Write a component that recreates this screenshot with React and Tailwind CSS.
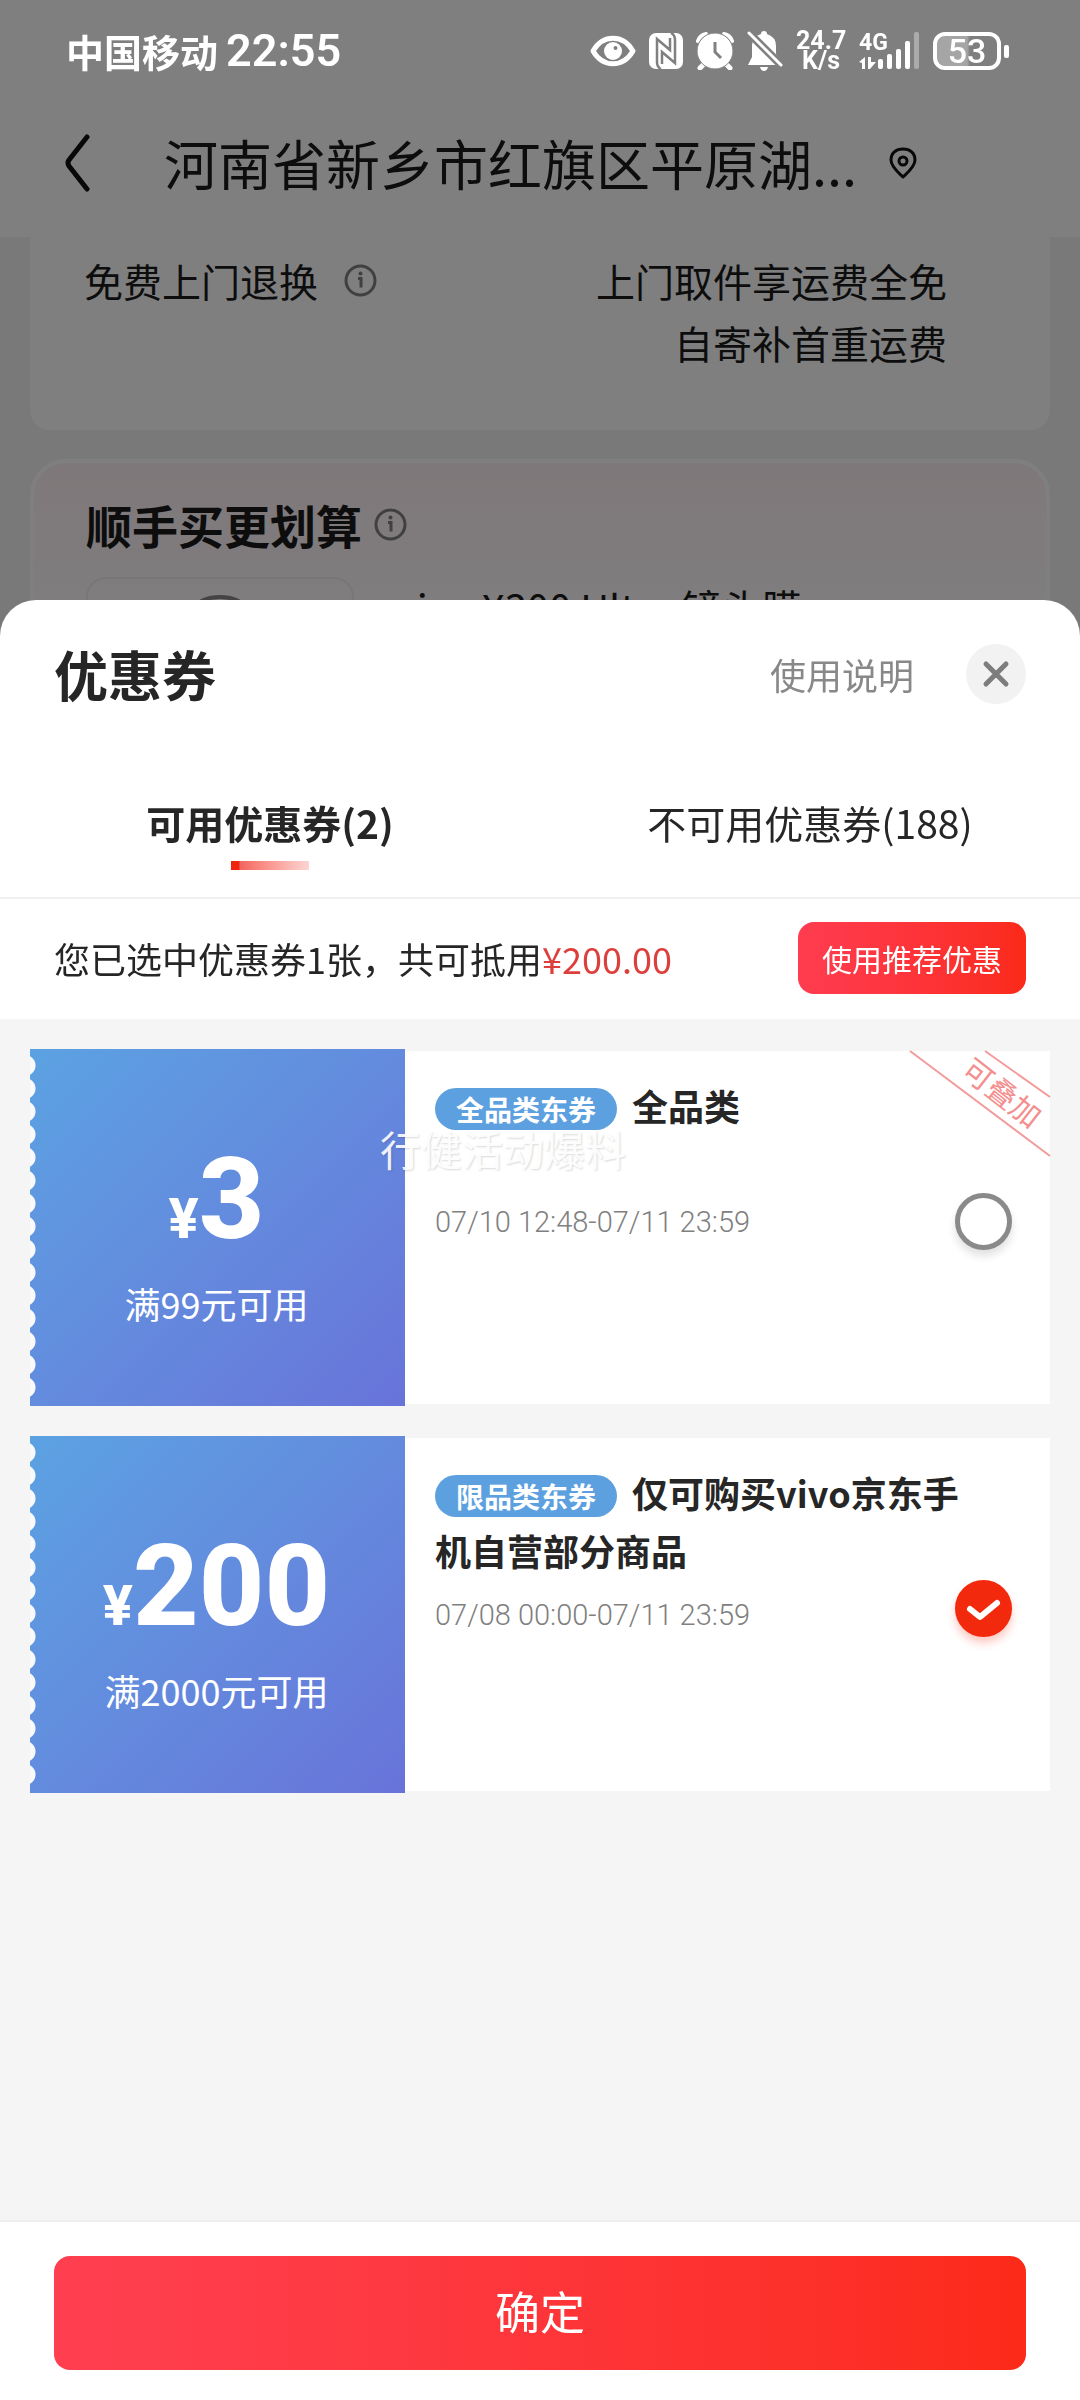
import React, { useState } from 'react';

const coupons = [
  {
    id: 1,
    amount: 3,
    limit: '满99元可用',
    tag: '全品类东券',
    title: '全品类',
    period: '07/10 12:48-07/11 23:59',
    stackable: true,
  },
  {
    id: 2,
    amount: 200,
    limit: '满2000元可用',
    tag: '限品类东券',
    title: '仅可购买vivo京东手机自营部分商品',
    period: '07/08 00:00-07/11 23:59',
    stackable: false,
  },
];

const InfoIcon = () => (
  <svg className="w-[33px] h-[33px] shrink-0" viewBox="0 0 33 33" fill="none" stroke="#808080" strokeWidth="3">
    <circle cx="16.5" cy="16.5" r="14.5" />
    <path d="M14 14.5h3v9" />
    <circle cx="16.5" cy="9.5" r="2" fill="#808080" stroke="none" />
  </svg>
);

const StatusBar = () => (
  <div className="relative z-20 h-[102px] pl-[66px] pr-[71px] flex items-center justify-between text-white">
    <div className="flex items-center gap-2">
      <span className="text-[38px] leading-[44px] font-bold">中国移动</span>
      <span className="font-['Roboto',sans-serif] text-[45px] leading-[44px] font-semibold">22:55</span>
    </div>

    <div className="flex items-center gap-[13px]">
      {/* Eye comfort */}
      <svg className="w-[46px] h-[32px]" viewBox="0 0 46 32">
        <path d="M3 16C13-1 33-1 43 16C33 33 13 33 3 16Z" fill="none" stroke="#fff" strokeWidth="5" strokeLinejoin="round" />
        <circle cx="23" cy="16" r="9" fill="#fff" />
        <circle cx="25.500" cy="13" r="2" fill="#808080" />
      </svg>

      {/* NFC */}
      <svg className="w-[34px] h-[36px]" viewBox="0 0 34 36">
        <rect width="34" height="36" rx="7" fill="#fff" />
        <g fill="none" stroke="#808080" strokeWidth="2.500">
          <path d="M12 36Q8 34 8 29V6L21 17V5" />
          <path d="M22 0Q26 2 26 7V30L13 19V31" />
        </g>
      </svg>

      {/* Alarm */}
      <svg className="w-[38px] h-[38px]" viewBox="0 0 38 38">
        <path d="M9 31L4 36M29 31L34 36" stroke="#fff" strokeWidth="5" strokeLinecap="round" />
        <path d="M2 9Q4 3 10 2M36 9Q34 3 28 2" fill="none" stroke="#fff" strokeWidth="4" strokeLinecap="round" />
        <circle cx="19" cy="19" r="18" fill="#fff" stroke="#808080" strokeWidth="1" />
        <path d="M19 10V20L25 26" fill="none" stroke="#808080" strokeWidth="3" />
      </svg>

      {/* Muted bell */}
      <svg className="w-[36px] h-[40px]" viewBox="0 0 36 40">
        <path d="M17 0q3 0 3 3q9 3 9 12v8l5 11H1l4-8V14Q5 6 14 3q0-3 3-3Z" fill="#fff" />
        <path d="M13 36h8q-1 4-4 4t-4-4Z" fill="#fff" />
        <path d="M0 0L36 36" stroke="#808080" strokeWidth="8" />
        <path d="M2 2L34 34" stroke="#fff" strokeWidth="3" strokeLinecap="round" />
      </svg>

      <div className="w-[50px] text-center font-['Roboto',sans-serif] text-[25px] leading-[20px] font-bold">
        <div>24.7</div>
        <div>K/s</div>
      </div>

      {/* Signal */}
      <svg className="w-[61px] h-[38px] overflow-visible" viewBox="0 0 61 38" fill="#fff">
        <text x="0" y="18" fontSize="23" fontWeight="700" fontFamily="Roboto, sans-serif">4G</text>
        <path d="M0 30L6 25V37H3V31ZM9 25H12V30L17 30L11 37H9Z" />
        <rect x="19" y="27" width="5" height="10" rx="2" />
        <rect x="28" y="22" width="5" height="15" rx="2" />
        <rect x="37" y="17" width="5" height="20" rx="2" />
        <rect x="46" y="9" width="5" height="28" rx="2" />
        <rect x="55" y="0" width="5" height="37" rx="2" fillOpacity="0.350" />
      </svg>

      {/* Battery */}
      <div className="flex items-center gap-[3px]">
        <div className="w-[68px] h-[38px] rounded-[12px] border-4 border-white bg-linear-to-r from-white/30 from-50% to-transparent to-55% flex items-center justify-center font-['Roboto',sans-serif] text-[34px] leading-[34px] font-medium">
          53
        </div>
        <div className="w-[5px] h-[13px] rounded-[2px] bg-white" />
      </div>
    </div>
  </div>
);

const CheckoutPage = () => (
  <div className="text-[#1a1a1a]">
    <div className="bg-white h-[135px] pl-[64px] pb-[14px] flex items-center">
      <button aria-label="返回" className="w-[100px]">
        <svg className="w-[27px] h-[60px]" viewBox="0 0 27 60" fill="none" stroke="#111" strokeWidth="5" strokeLinecap="round" strokeLinejoin="round">
          <path d="M23 4L5 27Q3 30 5 33L23 56" />
        </svg>
      </button>
      <h1 className="text-[54px] leading-[80px]">河南省新乡市红旗区平原湖...</h1>
      <svg className="w-[28px] h-[32px] ml-8" viewBox="0 0 28 32" fill="none" stroke="#111" strokeWidth="3" strokeLinejoin="round">
        <path d="M14 30C10 26 2 20 2 13C2 6 7 2 14 2S26 6 26 13C26 20 18 26 14 30Z" />
        <circle cx="14" cy="14" r="4" />
      </svg>
    </div>

    <div className="px-[30px]">
      <div className="bg-white rounded-b-[20px] h-[193px] pt-[12px] pl-[54px] pr-[103px] flex justify-between text-[39px] leading-[62px]">
        <div className="flex items-center gap-[26px] h-[62px]">
          <span>免费上门退换</span>
          <InfoIcon />
        </div>
        <div className="text-right">
          <div>上门取件享运费全免</div>
          <div>自寄补首重运费</div>
        </div>
      </div>

      <div className="mt-[29px] h-[400px] rounded-[36px] border-4 border-white bg-linear-to-b from-[#fff0f4] to-white to-50% pt-[28px] px-[52px]">
        <div className="flex items-center gap-[12px]">
          <h2 className="text-[46px] leading-[66px] font-bold">顺手买更划算</h2>
          <InfoIcon />
        </div>
        <div className="mt-5 flex gap-[42px]">
          <div className="w-[268px] h-[268px] rounded-[20px] border-2 border-[#eee] flex justify-center pt-4">
            <div className="w-[90px] h-[90px] rounded-full border-4 border-[#888]" />
          </div>
          <div className="text-[40px] leading-[60px]">vivo X300 Ultra 镜头膜</div>
        </div>
      </div>
    </div>
  </div>
);

const CouponCard = ({ coupon, checked, onToggle }) => (
  <label className="flex items-center cursor-pointer">
    <div className="flex shrink-0 w-[375px] h-[357px] bg-linear-135 from-[#5ba2e2] to-[#6873d9]">
      {/* Perforated edge */}
      <div className="w-[6px] my-[5px] bg-[radial-gradient(circle_at_-5px_50%,#f9f9fa_10px,transparent_11px)] bg-[length:6px_23px]" />
      <div className="flex-1 pt-[92px] pr-[8px] flex flex-col items-center text-white">
        <div className="flex items-baseline font-['Roboto',sans-serif] font-extrabold">
          <span className="text-[56px] leading-[56px]">¥</span>
          <span className="text-[114px] leading-[116px]">{coupon.amount}</span>
        </div>
        <div className="mt-[19px] text-[36px] leading-[54px]">{coupon.limit}</div>
      </div>
    </div>

    <div className="relative flex-1 h-[353px] bg-white pl-[30px] pr-[38px] flex items-center justify-between">
      <div className="self-start flex-1 pt-[25px]">
        <h3 className="min-h-[110px] -mr-4 text-[36px] leading-[58px] font-bold text-[#262626]">
          <span className="inline-block align-middle mr-[15px] px-[21px] rounded-full bg-[#5da0df] text-white text-[28px] leading-[42px] -mt-1">
            {coupon.tag}
          </span>
          {coupon.title}
        </h3>
        <p className="mt-4 font-['Roboto',sans-serif] font-light text-[29px] leading-[40px] text-[#808080]">{coupon.period}</p>
      </div>

      <span className="relative w-[57px] h-[57px] shrink-0 mb-3">
        <input
          type="checkbox"
          checked={checked}
          onChange={onToggle}
          className="block appearance-none w-[57px] h-[57px] rounded-full border-[5px] border-[#8a8a8a] bg-white shadow-[0_6px_8px_rgba(0,0,0,0.12)] checked:border-[#f3290e] checked:bg-[#f3290e] checked:shadow-[0_6px_8px_rgba(243,41,14,0.25)]"
        />
        {checked && (
          <svg className="absolute inset-0 pointer-events-none" viewBox="0 0 57 57" fill="none" stroke="#fff" strokeWidth="6" strokeLinecap="round" strokeLinejoin="round">
            <path d="M15 29L25 37L42 23" />
          </svg>
        )}
      </span>

      {coupon.stackable && (
        <svg className="absolute top-0 right-0 w-[140px] h-[106px] overflow-visible" viewBox="0 0 140 106">
          <path d="M0 0L140 105M75 0L140 46" stroke="#f59a9a" strokeWidth="2" />
          <text x="92" y="53" transform="rotate(38 92 42)" textAnchor="middle" fontSize="30" fill="#f38f8f">可叠加</text>
        </svg>
      )}
    </div>
  </label>
);

const App = () => {
  const [tab, setTab] = useState('usable');
  const [selected, setSelected] = useState([2]);

  const toggle = (id) => {
    setSelected(prev => prev.includes(id) ? prev.filter(x => x !== id) : [...prev, id]);
  };

  const total = coupons.filter(c => selected.includes(c.id)).reduce((sum, c) => sum + c.amount, 0);

  return (
    <div className="relative h-screen overflow-hidden bg-[#f2f2f2] font-['Noto_Sans_CJK_SC',sans-serif]">
      <div className="bg-white">
        <StatusBar />
      </div>
      <CheckoutPage />
      <div className="fixed inset-0 z-10 bg-black/50" />

      {/* Coupon sheet */}
      <div role="dialog" aria-label="优惠券" className="fixed inset-x-0 bottom-0 z-30 h-3/4 rounded-t-[36px] overflow-hidden bg-white text-[#262626] flex flex-col">
        <div className="h-[148px] px-[54px] flex items-center justify-between">
          <h2 className="text-[54px] leading-[80px] font-bold">优惠券</h2>
          <div className="flex items-center gap-[52px]">
            <a href="#rules" className="text-[36px] leading-[54px] text-[#888]">使用说明</a>
            <button aria-label="关闭" className="w-[60px] h-[60px] rounded-full bg-[#f2f2f2] flex items-center justify-center">
              <svg className="w-[28px] h-[28px]" viewBox="0 0 28 28" stroke="#7d7d7d" strokeWidth="5" strokeLinecap="round">
                <path d="M4 4L24 24M24 4L4 24" />
              </svg>
            </button>
          </div>
        </div>

        {/* Tabs */}
        <div role="tablist" className="h-[151px] grid grid-cols-2 border-b-2 border-[#f0f0f0] text-[39px] leading-[60px]">
          <button role="tab" aria-selected={tab === 'usable'} onClick={() => setTab('usable')} className="flex flex-col items-center pt-[44px]">
            <span className={tab === 'usable' ? 'font-bold' : ''}>可用优惠券(2)</span>
            {tab === 'usable' && <span className="mt-[9px] w-[78px] h-[9px] bg-linear-to-r from-[#f0250f] from-10% via-[#f2665f] via-12% to-[#fbd5d3]" />}
          </button>
          <button role="tab" aria-selected={tab === 'unusable'} onClick={() => setTab('unusable')} className="flex flex-col items-center pt-[44px]">
            <span className={tab === 'unusable' ? 'font-bold' : ''}>不可用优惠券(188)</span>
          </button>
        </div>

        {/* Summary */}
        <div className="h-[120px] px-[54px] pb-[2px] flex items-center justify-between">
          <p className="text-[36px] leading-[54px]">
            您已选中优惠券{selected.length}张，共可抵用<span className="text-[#dc3f3c]">¥{total.toFixed(2)}</span>
          </p>
          <button className="h-[72px] px-6 rounded-[16px] bg-linear-to-r from-[#ff3c50] to-[#fb2a18] text-white text-[30px] leading-[44px]">
            使用推荐优惠
          </button>
        </div>

        <div className="relative flex-1 bg-[#f5f5f5] px-[30px] pt-[30px] flex flex-col gap-[30px]">
          {tab === 'usable' && coupons.map(c => (
            <CouponCard key={c.id} coupon={c} checked={selected.includes(c.id)} onToggle={() => toggle(c.id)} />
          ))}
          {/* Watermark */}
          <div className="absolute left-[380px] top-[99px] text-[41px] leading-[60px] text-white/90 [text-shadow:1px_1px_2px_rgba(0,0,0,0.15)] pointer-events-none">
            行健活动爆料
          </div>
        </div>

        <div className="border-t-2 border-[#eee] px-[54px] pt-[34px] pb-[30px]">
          <button className="w-full h-[114px] pb-1 rounded-[16px] bg-linear-to-r from-[#ff3f50] to-[#fc2a18] text-white text-[45px] leading-[68px]">
            确定
          </button>
        </div>
      </div>
    </div>
  );
};

export default App;
